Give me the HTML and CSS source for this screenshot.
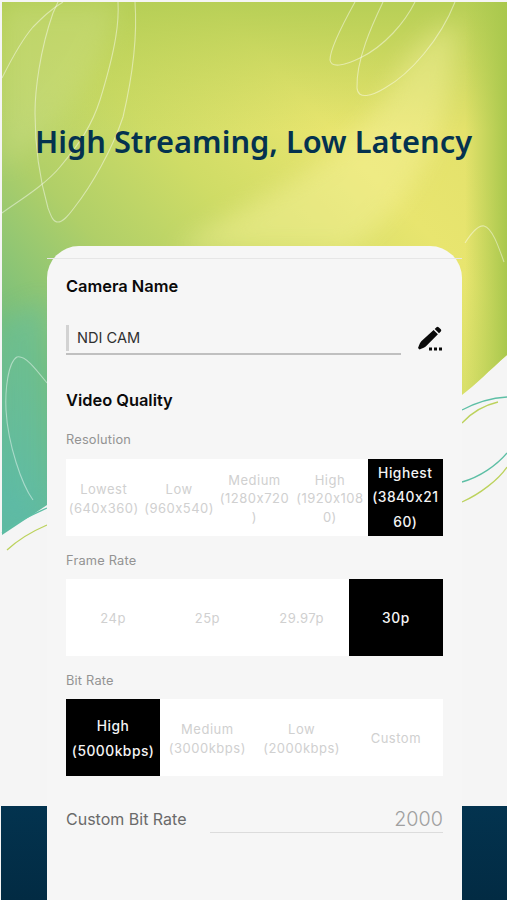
FILE: index.html
```html
<!DOCTYPE html>
<html lang="en">
<head>
<meta charset="utf-8">
<title>High Streaming, Low Latency</title>
<link rel="stylesheet" href="styles.css">
</head>
<body>
<div class="stage">
  <svg class="backdrop" viewBox="0 0 507 900" width="507" height="900" aria-hidden="true">
    <defs>
      <linearGradient id="base" gradientUnits="userSpaceOnUse" x1="10" y1="500" x2="430" y2="110">
        <stop offset="0" stop-color="#5fbaa2"/>
        <stop offset="0.2" stop-color="#78bf7c"/>
        <stop offset="0.42" stop-color="#b0cf68"/>
        <stop offset="0.62" stop-color="#cfdc66"/>
        <stop offset="0.85" stop-color="#e8e56f"/>
        <stop offset="1" stop-color="#e4e26c"/>
      </linearGradient>
      <linearGradient id="topband" gradientUnits="userSpaceOnUse" x1="250" y1="0" x2="250" y2="130">
        <stop offset="0" stop-color="#aecb52" stop-opacity="0.85"/>
        <stop offset="1" stop-color="#aecb52" stop-opacity="0"/>
      </linearGradient>
      <linearGradient id="rightband" gradientUnits="userSpaceOnUse" x1="465" y1="0" x2="507" y2="0">
        <stop offset="0" stop-color="#a9c84d" stop-opacity="0"/>
        <stop offset="1" stop-color="#a9c84d"/>
      </linearGradient>
      <linearGradient id="navy" gradientUnits="userSpaceOnUse" x1="0" y1="806" x2="0" y2="900">
        <stop offset="0" stop-color="#03334f"/>
        <stop offset="1" stop-color="#022b43"/>
      </linearGradient>
      <filter id="soft" x="-20%" y="-20%" width="140%" height="140%">
        <feGaussianBlur stdDeviation="12"/>
      </filter>
      <clipPath id="wave">
        <path d="M2 2H507V355C490 370 475 385 462 395L47 505L2 535Z"/>
      </clipPath>
    </defs>
    <rect width="507" height="900" fill="#f5f5f5"/>
    <g clip-path="url(#wave)">
      <rect width="507" height="540" fill="url(#base)"/>
      <rect width="507" height="170" fill="url(#topband)"/>
      <path d="M2 2H118C108 60 70 120 2 170Z" fill="#cfe08c" opacity="0.35" filter="url(#soft)"/>
      <path d="M175 250C260 190 330 180 390 90C405 55 425 35 455 20C460 110 420 200 350 250Z" fill="#f6f29e" opacity="0.45" filter="url(#soft)"/>
      <rect x="440" width="67" height="400" fill="url(#rightband)"/>
      <path d="M0 322L47 300V505L2 535Z" fill="#5fbdaa" opacity="0.4" filter="url(#soft)"/>
    </g>
    <g class="leaf-lines">
      <path d="M135 2C137 30 134 70 123 117C112 150 92 185 74 208C68 216 63 222 58 222C53 222 51 216 48 208C40 180 35 145 35 113C35 90 40 50 53 13L58 2"/>
      <path d="M118 2C119 20 117 45 100 100C92 125 80 143 60 167C45 185 20 200 2 213"/>
      <path d="M63 2C50 10 43 17 33 27C20 42 10 62 2 78"/>
      <path d="M355 2C345 20 330 48 330 60C331 68 344 66 360 58C385 46 405 22 415 2"/>
      <path d="M383 2C372 25 356 60 357 88C358 100 372 96 385 88C410 74 440 40 455 2"/>
      <path d="M465 243C472 232 478 225 484 226C492 228 498 245 504 262"/>
      <path d="M47 383C35 368 25 355 17 357C8 362 5 390 6 410C8 445 22 485 33 500"/>
    </g>
    <g class="swoosh">
      <path class="teal" d="M2 533C15 522 32 515 47 508"/>
      <path class="lime" d="M7 550C20 538 33 531 47 525"/>
      <path class="teal" d="M462 410C475 403 490 398 507 397"/>
      <path class="lime" d="M462 423C472 412 485 405 498 402"/>
      <path class="teal" d="M462 482C480 477 497 465 507 453"/>
      <path class="lime" d="M462 502C480 494 498 480 507 467"/>
    </g>
    <rect x="1" y="806" width="506" height="94" fill="url(#navy)"/>
  </svg>

  <h1 class="headline">High Streaming, Low Latency</h1>

  <main class="card">
    <div class="card-rule"></div>
    <h2 class="heading">Camera Name</h2>
    <div class="name-row">
      <div class="name-field">NDI CAM</div>
      <svg class="edit-icon" viewBox="0 0 26 26" width="26" height="26" aria-hidden="true">
        <path d="M19.500 1.200a1.500 1.500 0 0 1 2.100 0l2.200 2.100a1.500 1.500 0 0 1 0 2.100l-1.800 1.800-4.300-4.200z"/>
        <path d="M16.600 4L20.900 8.200 9 20.200c-1 1-3 1.800-6.500 3.300L1 22c1.500-3.700 2.300-5.800 3.300-6.700z"/>
        <rect x="12" y="21.500" width="3" height="3"/>
        <rect x="17" y="21.500" width="3" height="3"/>
        <rect x="22" y="21.500" width="3" height="3"/>
      </svg>
    </div>

    <h2 class="heading quality">Video Quality</h2>

    <div class="label label-first">Resolution</div>
    <div class="segments five">
      <div class="seg">Lowest<br>(640x360)</div>
      <div class="seg">Low<br>(960x540)</div>
      <div class="seg">Medium<br>(1280x720<br>)</div>
      <div class="seg">High<br>(1920x108<br>0)</div>
      <div class="seg on">Highest<br>(3840x21<br>60)</div>
    </div>

    <div class="label label-frame">Frame Rate</div>
    <div class="segments four">
      <div class="seg">24p</div>
      <div class="seg">25p</div>
      <div class="seg">29.97p</div>
      <div class="seg on">30p</div>
    </div>

    <div class="label">Bit Rate</div>
    <div class="segments four tight">
      <div class="seg on">High<br>(5000kbps)</div>
      <div class="seg">Medium<br>(3000kbps)</div>
      <div class="seg">Low<br>(2000kbps)</div>
      <div class="seg">Custom</div>
    </div>

    <div class="custom-row">
      <span class="custom-label">Custom Bit Rate</span>
      <span class="custom-value">2000</span>
    </div>
  </main>
</div>
</body>
</html>
```
FILE: styles.css
```css
* { box-sizing: border-box; }
html, body { margin: 0; padding: 0; }
body { background: #f5f5f5; font-family: Inter, "Liberation Sans", sans-serif; }

.stage {
  position: relative;
  width: 507px;
  height: 900px;
  overflow: hidden;
  padding-top: 118px;
}
.backdrop { position: absolute; left: 0; top: 0; }
.leaf-lines path { fill: none; stroke: #fff; stroke-opacity: 0.45; stroke-width: 1.1; }
.swoosh path { fill: none; stroke-width: 1.3; }
.swoosh .teal { stroke: #5dbfa5; }
.swoosh .lime { stroke: #bcd25c; }

.headline {
  position: relative;
  margin: 0;
  height: 46px;
  line-height: 46px;
  text-align: center;
  font-family: "Noto Sans", sans-serif;
  font-size: 30.800px;
  font-weight: 600;
  color: #04324f;
  white-space: nowrap;
}

.card {
  position: relative;
  margin: 82px 0 0 47px;
  width: 415px;
  height: 654px;
  padding: 0 19px;
  background: #f6f6f6;
  border-radius: 32px 32px 0 0;
}
.card-rule { height: 13px; border-bottom: 1px solid #e6e6e6; margin: 0 -19px; }

.heading {
  margin: 0;
  font-size: 16.400px;
  line-height: 20px;
  font-weight: 600;
  color: #0a0a0a;
}
.card-rule + .heading { margin-top: 17px; }

.name-row {
  display: flex;
  align-items: flex-end;
  justify-content: space-between;
  margin-top: 29px;
}
.name-field {
  width: 335px;
  height: 30px;
  padding-left: 11px;
  line-height: 26px;
  font-size: 14.600px;
  color: #303030;
  border-bottom: 2px solid #c0c0c0;
  position: relative;
}
.name-field::before {
  content: "";
  position: absolute;
  left: 0;
  top: 0;
  bottom: 2px;
  width: 3px;
  background: #d2d2d2;
}
.edit-icon { fill: #0a0a0a; margin-bottom: 3px; }

.quality { margin-top: 35px; }

.label {
  margin-top: 16px;
  height: 17px;
  line-height: 17px;
  font-size: 12.800px;
  color: #939393;
  letter-spacing: 0.2px;
}
.label-first { margin-top: 21px; }
.label-first + .segments { margin-top: 11px; }
.label-frame { margin-top: 16px; }

.segments {
  display: grid;
  height: 77px;
  margin-top: 10px;
  background: #fff;
}
.five { grid-template-columns: repeat(5, 1fr); }
.four { grid-template-columns: repeat(4, 1fr); }
.label-frame + .segments { margin-top: 10px; }
.tight { margin-top: 10px; }

.seg {
  display: flex;
  align-items: center;
  justify-content: center;
  text-align: center;
  padding-top: 2px;
  font-size: 13px;
  line-height: 18.500px;
  letter-spacing: 0.5px;
  color: #d0d0d0;
  white-space: nowrap;
}
.seg.on {
  background: #000;
  color: #f4f4f4;
  font-size: 13.800px;
  font-weight: 500;
  line-height: 24.500px;
}
.five .seg.on { padding-top: 0; }

.custom-row {
  display: flex;
  align-items: flex-end;
  justify-content: space-between;
  margin-top: 27px;
  height: 30px;
}
.custom-label {
  font-size: 16px;
  line-height: 28px;
  color: #6a6a6a;
}
.custom-value {
  width: 233px;
  height: 30px;
  text-align: right;
  font-size: 19.800px;
  line-height: 32px;
  font-weight: 300;
  color: #a0a0a0;
  border-bottom: 1px solid #dcdcdc;
}
```
